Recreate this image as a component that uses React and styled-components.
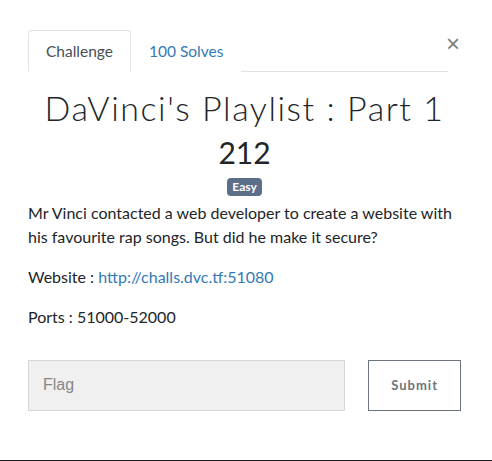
import styled, { createGlobalStyle } from "styled-components";

const GlobalStyle = createGlobalStyle`
  * {
    box-sizing: border-box;
  }
  body {
    margin: 0;
    background: #fff;
    font-family: Lato, "Open Sans", sans-serif;
    color: #212529;
  }
`;

const Modal = styled.div`
  width: 492px;
  height: 461px;
  padding: 30px 31px 0 28px;
  border-bottom: 1px solid #1d1f22;
  overflow: hidden;
`;

const Header = styled.div`
  display: flex;
  align-items: flex-start;
`;

const Tabs = styled.div`
  display: flex;
  width: 420px;
  border-bottom: 1px solid #dee2e6;
`;

const Tab = styled.div`
  height: 42px;
  margin-bottom: -1px;
  padding: 0 17px;
  display: flex;
  align-items: center;
  font-size: 15.5px;
  color: ${({ active }) => (active ? "#495057" : "#337ab7")};
  background: #fff;
  border: 1px solid ${({ active }) => (active ? "#dee2e6" : "transparent")};
  border-bottom-color: ${({ active }) => (active ? "#fff" : "transparent")};
  border-radius: 4px 4px 0 0;
`;

const Close = styled.button`
  margin: 2px 0 0 -2px;
  padding: 0;
  border: none;
  background: none;
  font-family: Arial, "Liberation Sans", sans-serif;
  font-size: 24px;
  line-height: 24px;
  font-weight: 400;
  color: #7d7d7d;
  cursor: pointer;
`;

const Title = styled.h1`
  margin: 16px 0 0;
  text-align: center;
  font-weight: 300;
  font-size: 34px;
  line-height: 1.2;
  letter-spacing: 1.55px;
  color: #212529;
`;

const Points = styled.h2`
  margin: 5px 0 0;
  text-align: center;
  font-weight: 400;
  font-size: 30px;
  line-height: 1.2;
  color: #212529;
`;

const BadgeRow = styled.div`
  display: flex;
  justify-content: center;
  margin-top: 8px;
`;

const Badge = styled.span`
  display: inline-block;
  padding: 2px 5px;
  font-size: 12px;
  font-weight: 700;
  line-height: 14px;
  color: #fff;
  background: #5c6f89;
  border-radius: 4px;
`;

const Description = styled.div`
  margin-top: 5px;
  font-size: 16px;
  line-height: 24px;
`;

const Paragraph = styled.p`
  margin: 0 0 16px;
  width: 430px;
`;

const Link = styled.a`
  color: #337ab7;
  text-decoration: none;
`;

const Form = styled.form`
  display: flex;
  align-items: flex-start;
  gap: 23px;
  margin-top: 31px;
`;

const FlagInput = styled.input`
  width: 318px;
  height: 51px;
  padding: 0 14px;
  background: #f0f0f0;
  border: 1px solid #d3d6da;
  font-family: Arial, "Liberation Sans", sans-serif;
  font-size: 16px;
  color: #495057;
  outline: none;

  &::placeholder {
    color: #878787;
  }
`;

const SubmitButton = styled.button`
  width: 93px;
  height: 51px;
  background: #fff;
  border: 1px solid #6c757d;
  font-family: Lato, sans-serif;
  font-size: 13px;
  font-weight: 700;
  letter-spacing: 1px;
  color: #6c757d;
  cursor: pointer;
`;

export default function App() {
  return (
    <>
      <GlobalStyle />
      <Modal>
        <Header>
          <Tabs>
            <Tab active>Challenge</Tab>
            <Tab>100 Solves</Tab>
          </Tabs>
          <Close aria-label="Close">×</Close>
        </Header>
        <Title>DaVinci's Playlist : Part 1</Title>
        <Points>212</Points>
        <BadgeRow>
          <Badge>Easy</Badge>
        </BadgeRow>
        <Description>
          <Paragraph>
            Mr Vinci contacted a web developer to create a website with his
            favourite rap songs. But did he make it secure?
          </Paragraph>
          <Paragraph>
            Website : <Link href="#">http://challs.dvc.tf:51080</Link>
          </Paragraph>
          <Paragraph>Ports : 51000-52000</Paragraph>
        </Description>
        <Form onSubmit={(e) => e.preventDefault()}>
          <FlagInput placeholder="Flag" />
          <SubmitButton type="submit">Submit</SubmitButton>
        </Form>
      </Modal>
    </>
  );
}
